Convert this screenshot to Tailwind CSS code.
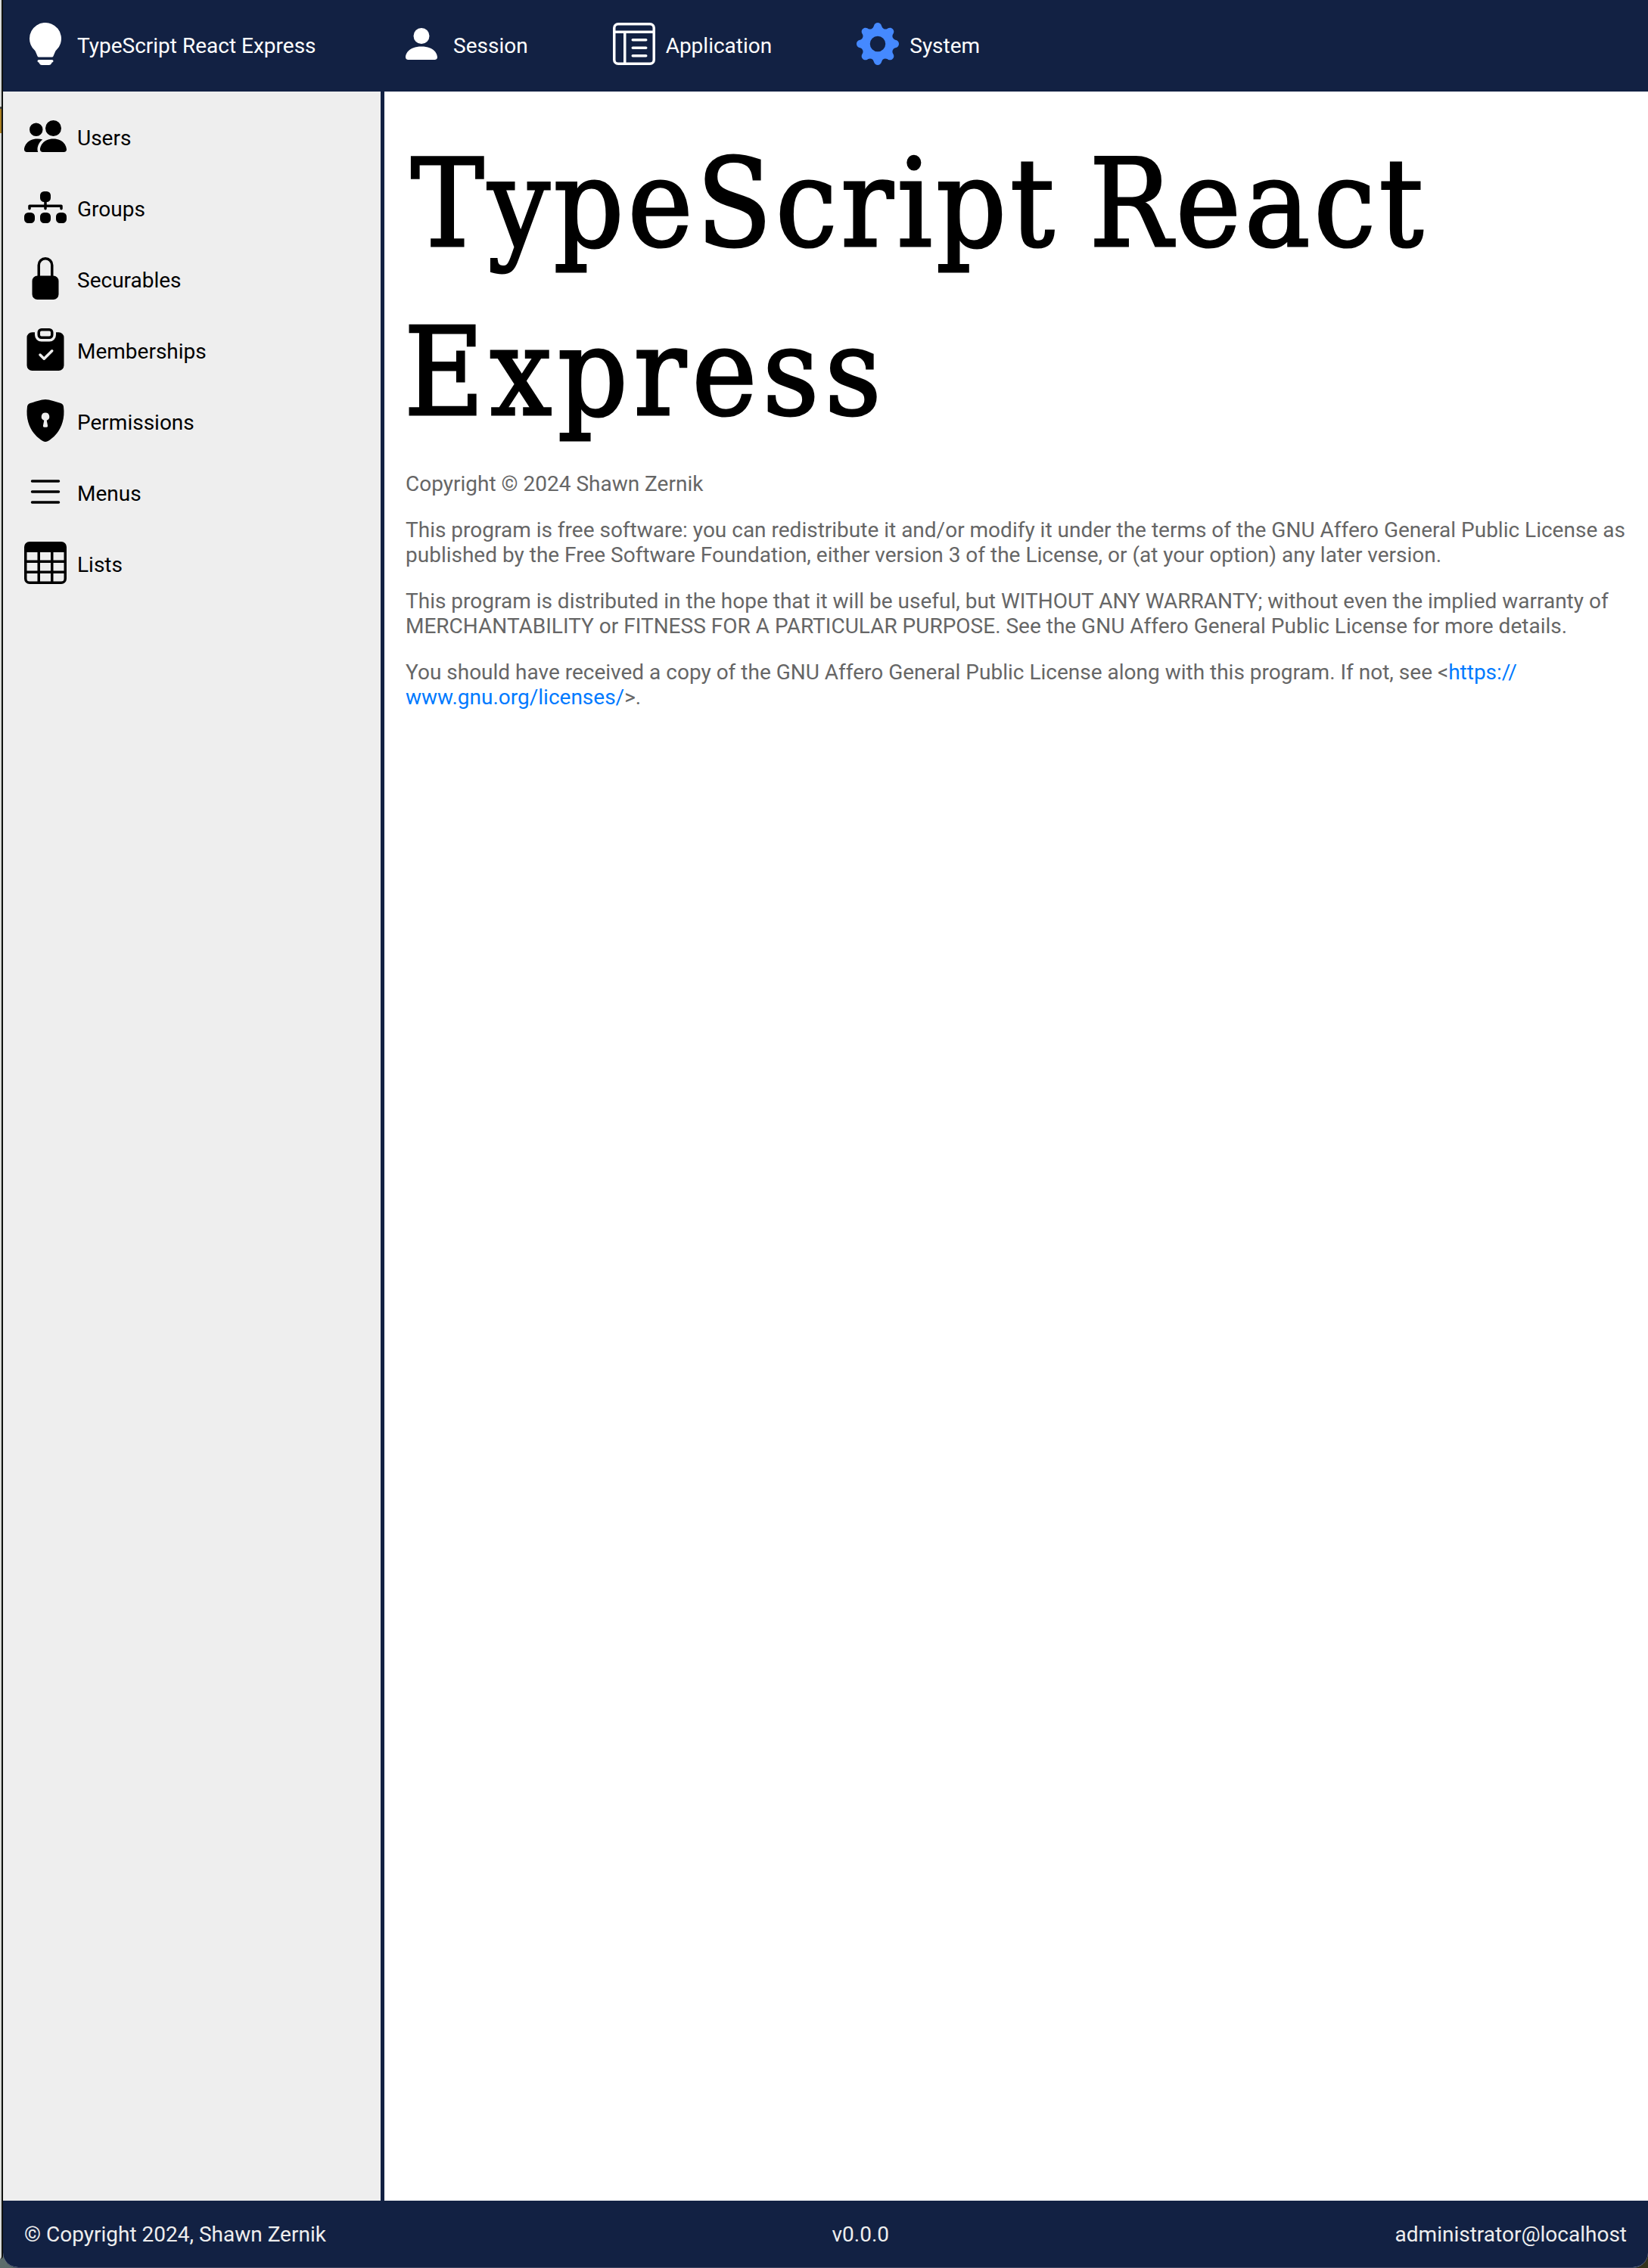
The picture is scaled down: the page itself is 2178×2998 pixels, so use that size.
<!DOCTYPE html>
<html lang="en">
<head>
<meta charset="utf-8">
<title>TypeScript React Express</title>
<script src="https://cdn.jsdelivr.net/npm/@tailwindcss/browser@4"></script>
</head>
<body class="flex h-[2998px] w-[2178px] overflow-hidden bg-linear-to-r from-[#5c6d6c] to-[#33331c] font-[Roboto,sans-serif] text-[28px] leading-[33px] text-black">
<!-- edge of the window behind -->
<div class="flex h-[2986px] w-1 flex-col rounded-br-sm border-r-2 border-[#10120f] bg-[#d9dbd8]">
  <div class="mt-[141px] h-[3px] bg-[#4c4c48]"></div>
  <div class="h-8 bg-[#ab8022]"></div>
</div>
<div class="flex flex-1 flex-col overflow-hidden rounded-b-[20px] border-b border-[#3c4460] bg-white">
  <header class="flex h-[121px] items-start bg-[#122143] pt-[30px] pl-7 text-white">
    <div class="flex w-[497px] gap-[14px]">
      <svg class="size-14" viewBox="0 0 16 16" fill="currentColor"><path d="M2 6a6 6 0 1 1 10.174 4.31c-.203.196-.359.4-.453.619l-.762 1.769A.5.5 0 0 1 10.5 13h-5a.5.5 0 0 1-.46-.302l-.761-1.77a2 2 0 0 0-.453-.618A5.98 5.98 0 0 1 2 6m3 8.5a.5.5 0 0 1 .5-.5h5a.5.5 0 0 1 0 1l-.224.447a1 1 0 0 1-.894.553H6.618a1 1 0 0 1-.894-.553L5.5 15a.5.5 0 0 1-.5-.5"/></svg>
      <span class="pt-[14px]">TypeScript React Express</span>
    </div>
    <nav class="flex gap-28">
      <a class="flex gap-[14px]">
        <svg class="size-14" viewBox="0 0 16 16" fill="currentColor"><path d="M3 14s-1 0-1-1 1-4 6-4 6 3 6 4-1 1-1 1zm5-6a3 3 0 1 0 0-6 3 3 0 0 0 0 6"/></svg>
        <span class="pt-[14px]">Session</span>
      </a>
      <a class="flex gap-[14px]">
        <svg class="size-14" viewBox="0 0 16 16" fill="currentColor"><path d="M13 6.5a.5.5 0 0 0-.5-.5h-5a.5.5 0 0 0 0 1h5a.5.5 0 0 0 .5-.5m0 3a.5.5 0 0 0-.5-.5h-5a.5.5 0 0 0 0 1h5a.5.5 0 0 0 .5-.5m-.5 2.5a.5.5 0 0 1 0 1h-5a.5.5 0 0 1 0-1z"/><path d="M14 0a2 2 0 0 1 2 2v12a2 2 0 0 1-2 2H2a2 2 0 0 1-2-2V2a2 2 0 0 1 2-2zM2 1a1 1 0 0 0-1 1v1h14V2a1 1 0 0 0-1-1zM1 4v10a1 1 0 0 0 1 1h2V4zm4 0v11h9a1 1 0 0 0 1-1V4z"/></svg>
        <span class="pt-[14px]">Application</span>
      </a>
      <a class="flex gap-[14px]">
        <svg class="size-14 text-[#4589ff]" viewBox="0 0 16 16" fill="currentColor"><path d="M9.405 1.05c-.413-1.4-2.397-1.4-2.81 0l-.1.34a1.464 1.464 0 0 1-2.105.872l-.31-.17c-1.283-.698-2.686.705-1.987 1.987l.169.311c.446.82.023 1.841-.872 2.105l-.34.1c-1.4.413-1.4 2.397 0 2.81l.34.1a1.464 1.464 0 0 1 .872 2.105l-.17.31c-.698 1.283.705 2.686 1.987 1.987l.311-.169a1.464 1.464 0 0 1 2.105.872l.1.34c.413 1.4 2.397 1.4 2.81 0l.1-.34a1.464 1.464 0 0 1 2.105-.872l.31.17c1.283.698 2.686-.705 1.987-1.987l-.169-.311a1.464 1.464 0 0 1 .872-2.105l.34-.1c1.4-.413 1.4-2.397 0-2.81l-.34-.1a1.464 1.464 0 0 1-.872-2.105l.17-.31c.698-1.283-.705-2.686-1.987-1.987l-.311.169a1.464 1.464 0 0 1-2.105-.872zM8 10.93a2.929 2.929 0 1 1 0-5.86 2.929 2.929 0 0 1 0 5.858z"/></svg>
        <span class="pt-[14px]">System</span>
      </a>
    </nav>
  </header>
  <div class="flex flex-1">
    <aside class="flex w-[504px] flex-col gap-[38px] border-r-[5px] border-[#122143] bg-[#eee] pt-[31px] pl-7">
      <a class="flex gap-[14px]">
        <svg class="size-14" viewBox="0 0 16 16" fill="currentColor"><path d="M7 14s-1 0-1-1 1-4 5-4 5 3 5 4-1 1-1 1zm4-6a3 3 0 1 0 0-6 3 3 0 0 0 0 6m-5.784 6A2.24 2.24 0 0 1 5 13c0-1.355.68-2.75 1.936-3.72A6.3 6.3 0 0 0 5 9c-4 0-5 3-5 4s1 1 1 1zM4.5 8a2.5 2.5 0 1 0 0-5 2.5 2.5 0 0 0 0 5"/></svg>
        <span class="pt-[14px]">Users</span>
      </a>
      <a class="flex gap-[14px]">
        <svg class="size-14" viewBox="0 0 16 16" fill="currentColor"><path d="M6 3.5A1.5 1.5 0 0 1 7.5 2h1A1.5 1.5 0 0 1 10 3.5v1A1.5 1.5 0 0 1 8.5 6v1H14a.5.5 0 0 1 .5.5v1a.5.5 0 0 1-1 0V8h-5v.5a.5.5 0 0 1-1 0V8h-5v.5a.5.5 0 0 1-1 0v-1A.5.5 0 0 1 2 7h5.5V6A1.5 1.5 0 0 1 6 4.5zm-6 8A1.5 1.5 0 0 1 1.5 10h1A1.5 1.5 0 0 1 4 11.5v1A1.5 1.5 0 0 1 2.500 14h-1A1.5 1.5 0 0 1 0 12.5zm6 0A1.5 1.5 0 0 1 7.5 10h1a1.5 1.5 0 0 1 1.5 1.5v1A1.5 1.5 0 0 1 8.5 14h-1A1.5 1.5 0 0 1 6 12.5zm6 0a1.5 1.5 0 0 1 1.5-1.5h1a1.5 1.5 0 0 1 1.5 1.5v1a1.5 1.5 0 0 1-1.5 1.5h-1a1.5 1.5 0 0 1-1.5-1.5z"/></svg>
        <span class="pt-[14px]">Groups</span>
      </a>
      <a class="flex gap-[14px]">
        <svg class="size-14" viewBox="0 0 16 16" fill="currentColor"><path d="M8 1a2 2 0 0 1 2 2v4H6V3a2 2 0 0 1 2-2m3 6V3a3 3 0 0 0-6 0v4a2 2 0 0 0-2 2v5a2 2 0 0 0 2 2h6a2 2 0 0 0 2-2V9a2 2 0 0 0-2-2"/></svg>
        <span class="pt-[14px]">Securables</span>
      </a>
      <a class="flex gap-[14px]">
        <svg class="size-14" viewBox="0 0 16 16" fill="currentColor"><path d="M6.5 0A1.5 1.5 0 0 0 5 1.500v1A1.5 1.5 0 0 0 6.5 4h3A1.5 1.5 0 0 0 11 2.5v-1A1.5 1.5 0 0 0 9.5 0zm3 1a.5.5 0 0 1 .5.5v1a.5.5 0 0 1-.5.5h-3a.5.5 0 0 1-.5-.5v-1a.5.5 0 0 1 .5-.5z"/><path d="M4 1.5H3a2 2 0 0 0-2 2V14a2 2 0 0 0 2 2h10a2 2 0 0 0 2-2V3.5a2 2 0 0 0-2-2h-1v1A2.5 2.5 0 0 1 9.5 5h-3A2.5 2.5 0 0 1 4 2.5zm6.854 7.354-3 3a.5.5 0 0 1-.708 0l-1.5-1.5a.5.5 0 0 1 .708-.708L7.5 10.793l2.646-2.647a.5.5 0 0 1 .708.708"/></svg>
        <span class="pt-[14px]">Memberships</span>
      </a>
      <a class="flex gap-[14px]">
        <svg class="size-14" viewBox="0 0 16 16" fill="currentColor"><path d="M8 0c-.69 0-1.843.265-2.928.56-1.11.3-2.229.655-2.887.87a1.54 1.54 0 0 0-1.044 1.262c-.596 4.477.787 7.795 2.465 9.99a11.8 11.8 0 0 0 2.517 2.453c.386.273.744.482 1.048.625.28.132.581.24.829.24s.548-.108.829-.24a7 7 0 0 0 1.048-.625 11.8 11.8 0 0 0 2.517-2.453c1.678-2.195 3.061-5.513 2.465-9.99a1.54 1.54 0 0 0-1.044-1.263 63 63 0 0 0-2.887-.87C9.843.266 8.69 0 8 0m0 5a1.5 1.5 0 0 1 .5 2.915l.385 1.99a.5.5 0 0 1-.491.595h-.788a.5.5 0 0 1-.49-.595l.384-1.99A1.5 1.5 0 0 1 8 5"/></svg>
        <span class="pt-[14px]">Permissions</span>
      </a>
      <a class="flex gap-[14px]">
        <svg class="size-14" viewBox="0 0 16 16" fill="currentColor"><path d="M2.5 12a.5.5 0 0 1 .5-.5h10a.5.5 0 0 1 0 1H3a.5.5 0 0 1-.5-.5m0-4a.5.5 0 0 1 .5-.5h10a.5.5 0 0 1 0 1H3a.5.5 0 0 1-.5-.5m0-4a.5.5 0 0 1 .5-.5h10a.5.5 0 0 1 0 1H3a.5.5 0 0 1-.5-.5"/></svg>
        <span class="pt-[14px]">Menus</span>
      </a>
      <a class="flex gap-[14px]">
        <svg class="size-14" viewBox="0 0 16 16" fill="currentColor"><path d="M0 2a2 2 0 0 1 2-2h12a2 2 0 0 1 2 2v12a2 2 0 0 1-2 2H2a2 2 0 0 1-2-2zm15 2h-4v3h4zm0 4h-4v3h4zm0 4h-4v3h3a1 1 0 0 0 1-1zm-5 3v-3H6v3zm-5 0v-3H1v2a1 1 0 0 0 1 1zm-4-4h4V8H1zm0-4h4V4H1zm5-3v3h4V4zm4 4H6v3h4z"/></svg>
        <span class="pt-[14px]">Lists</span>
      </a>
    </aside>
    <main class="flex flex-1 flex-col gap-7 pt-7 pl-7 text-[#666]">
      <h1 class="h-[446px] pt-[9px] font-['Roboto_Slab','DejaVu_Serif_Condensed','DejaVu_Serif',serif] text-[161px] leading-[223px] whitespace-nowrap text-black [-webkit-text-stroke:3px_black]">
        <span class="ml-[7px] block tracking-[5.2px] [word-spacing:-10px]">TypeScript React</span>
        <span class="-ml-[2px] block tracking-[7.8px]">Express</span>
      </h1>
      <p>Copyright © 2024 Shawn Zernik</p>
      <p>This program is free software: you can redistribute it and/or modify it under the terms of the GNU Affero General Public License as<br>published by the Free Software Foundation, either version 3 of the License, or (at your option) any later version.</p>
      <p>This program is distributed in the hope that it will be useful, but WITHOUT ANY WARRANTY; without even the implied warranty of<br>MERCHANTABILITY or FITNESS FOR A PARTICULAR PURPOSE. See the GNU Affero General Public License for more details.</p>
      <p>You should have received a copy of the GNU Affero General Public License along with this program. If not, see &lt;<a class="text-[#007aff]">https://<br>www.gnu.org/licenses/</a>&gt;.</p>
    </main>
  </div>
  <footer class="flex h-[88px] justify-between bg-[#122143] px-7 pt-7 text-[#eee]">
    <span>© Copyright 2024, Shawn Zernik</span>
    <span>v0.0.0</span>
    <span>administrator@localhost</span>
  </footer>
</div>
</body>
</html>
